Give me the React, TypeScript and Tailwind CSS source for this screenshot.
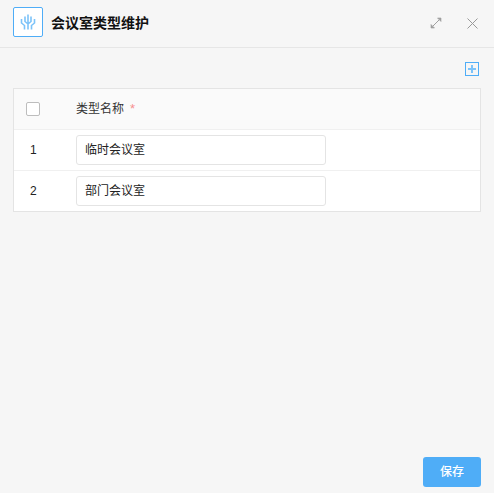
export default function App() {
  const rows = [
    { n: 1, v: "临时会议室" },
    { n: 2, v: "部门会议室" },
  ];
  return (
    <div className="flex h-[493px] w-[494px] flex-col overflow-hidden bg-[#f6f6f6] text-[12px] text-[#222] [font-family:'Liberation_Sans','Noto_Sans_CJK_SC',sans-serif]">
      <header className="flex h-[48px] shrink-0 items-start border-b border-[#e6e6e6] pl-[13px] pr-[16px] pt-[7px]">
        <div className="flex h-[30px] w-[30px] items-center justify-center rounded-[2px] border border-[#4fadf7] bg-white">
          <svg width="16" height="16" viewBox="0 0 16 16" fill="none" stroke="#7cc3f9" strokeWidth="1.6">
            <path d="M8 0.500V15.500M5 2.500V7.500L8 10M11 2.500V7.500L8 10M1.500 5V9L4.500 11.500V15.500M14.500 5V9L11.500 11.500V15.500" />
          </svg>
        </div>
        <h1 className="ml-[8px] mt-[6px] text-[14px] font-bold leading-[20px] text-[#111]">会议室类型维护</h1>
        <div className="ml-auto mt-[10px] flex items-center gap-[25px]">
          <svg width="12" height="12" viewBox="0 0 12 12" fill="none" stroke="#a0a0a0" strokeWidth="1">
            <path d="M3 9L9 3" />
            <path d="M7.500 1h3.500v3.500z" fill="#a0a0a0" stroke="#a0a0a0" strokeWidth="0.6" />
            <path d="M4.500 11H1V7.500z" fill="#a0a0a0" stroke="#a0a0a0" strokeWidth="0.6" />
          </svg>
          <svg width="11" height="11" viewBox="0 0 11 11" fill="none" stroke="#999" strokeWidth="1">
            <path d="M.5.500l10 10M10.500.500l-10 10" />
          </svg>
        </div>
      </header>

      <main className="flex min-h-0 flex-1 flex-col pl-[13px] pr-[13px]">
        <div className="flex justify-end pr-[2px] pt-[14px]">
          <div className="flex h-[14px] w-[14px] items-center justify-center border border-[#4fadf7]">
            <svg width="8" height="8" viewBox="0 0 8 8" stroke="#7cc3f9" strokeWidth="2">
              <path d="M4 0v8M0 4h8" />
            </svg>
          </div>
        </div>

        <div className="mt-[12px] border border-[#e4e4e4] bg-white">
          <div className="flex h-[41px] items-center border-b border-[#f0f0f0] bg-[#fafafa]">
            <div className="w-[62px] pl-[12px]">
              <div className="h-[14px] w-[14px] rounded-[2px] border border-[#bdbdbd] bg-white" />
            </div>
            <div className="flex items-center">
              <span className="text-[#333]">类型名称</span>
              <span className="ml-[6px] text-[13px] text-[#f78f8f]">*</span>
            </div>
          </div>
          {rows.map((r, i) => (
            <div key={r.n} className={`flex items-center ${i === 0 ? "h-[41px] border-b border-[#f0f0f0]" : "h-[40px]"}`}>
              <div className="w-[62px] pl-[16px] text-[12px] text-[#222]">{r.n}</div>
              <div className="flex h-[30px] w-[250px] items-center rounded-[3px] border border-[#e4e4e4] bg-white pl-[8px] text-[#222]">
                {r.v}
              </div>
            </div>
          ))}
        </div>

        <div className="mt-auto flex justify-end pb-[6px]">
          <button className="h-[30px] w-[58px] rounded-[3px] bg-[#4fadf7] text-[12px] font-medium text-white">保存</button>
        </div>
      </main>
    </div>
  );
}
